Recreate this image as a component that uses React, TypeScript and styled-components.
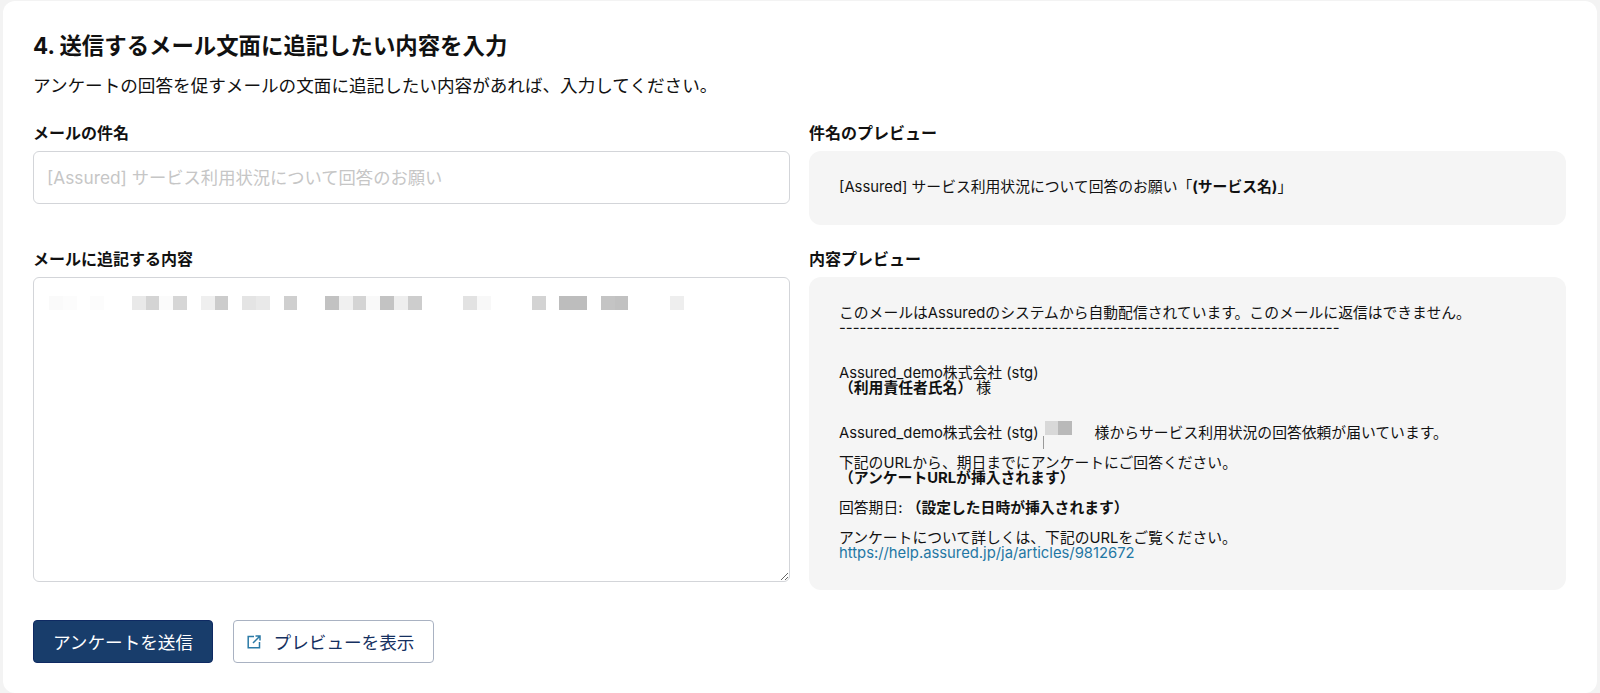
import React from "react";
import styled, { createGlobalStyle } from "styled-components";

const Global = createGlobalStyle`
    html, body {
        margin: 0;
        padding: 0;
        background: #f3f3f3;
    }
    body {
        font-family: "Inter", "Noto Sans CJK JP", sans-serif;
        color: #111;
    }
`;

const noteCells = [
    "#fafafa", "#fcfcfc", "", "#fcfcfc", "", "", "#e9e9e9", "#d4d4d4", "#fbfbfb", "#d6d6d6", "", "#efefef", "#cccccc", "",
    "#e4e4e4", "#e9e9e9", "", "#cfcfcf", "", "", "#c2c2c2", "#f0f0f0", "#d4d4d4", "#f9f9f9", "#c3c3c3", "#eeeeee", "#cdcdcd",
    "", "", "", "#e2e2e2", "#f8f8f8", "", "", "", "#d3d3d3", "", "#bdbdbd", "#bdbdbd", "", "#c4c4c4", "#c1c1c1", "", "", "", "#eeeeee",
];

const App = () => {
    return (
        <>
            <Global />
            <Card>
                <Title>4. 送信するメール文面に追記したい内容を入力</Title>
                <Lead>アンケートの回答を促すメールの文面に追記したい内容があれば、入力してください。</Lead>
                <FormGrid>
                    <Field>
                        <Label>メールの件名</Label>
                        <SubjectInput placeholder="[Assured] サービス利用状況について回答のお願い" />
                    </Field>
                    <Field>
                        <Label>件名のプレビュー</Label>
                        <SubjectPreview>
                            [Assured] サービス利用状況について回答のお願い「<b>(サービス名)</b>」
                        </SubjectPreview>
                    </Field>
                    <Field>
                        <Label>メールに追記する内容</Label>
                        <NoteWrap>
                            <NoteArea />
                            <NoteMosaic>
                                {noteCells.map((shade, key) => (
                                    <Cell key={key} $shade={shade} />
                                ))}
                            </NoteMosaic>
                        </NoteWrap>
                    </Field>
                    <Field>
                        <Label>内容プレビュー</Label>
                        <PreviewPanel>
                            このメールはAssuredのシステムから自動配信されています。このメールに返信はできません。<br />
                            <Dashes>-------------------------------------------------------------------------</Dashes><br />
                            <br />
                            <br />
                            Assured_demo株式会社 (stg)<br />
                            <b>（利用責任者氏名）</b> 様<br />
                            <br />
                            <br />
                            Assured_demo株式会社 (stg)
                            <InlineRedact>
                                <RedactCells>
                                    <Cell $shade="#d8d8d8" />
                                    <Cell $shade="#b9b9b9" />
                                </RedactCells>
                                <Caret />
                            </InlineRedact>
                            様からサービス利用状況の回答依頼が届いています。<br />
                            <br />
                            下記のURLから、期日までにアンケートにご回答ください。<br />
                            <b>（アンケートURLが挿入されます）</b><br />
                            <br />
                            回答期日: <b>（設定した日時が挿入されます）</b><br />
                            <br />
                            アンケートについて詳しくは、下記のURLをご覧ください。<br />
                            <HelpLink href="#">https://help.assured.jp/ja/articles/9812672</HelpLink>
                        </PreviewPanel>
                    </Field>
                </FormGrid>
                <Actions>
                    <PrimaryButton>アンケートを送信</PrimaryButton>
                    <SecondaryButton>
                        <svg width="14" height="14" viewBox="0 0 14 14" fill="none" stroke="#2b7aa6" strokeWidth="1.5">
                            <path d="M7 1.5H1.2v11.3h11.3V7" />
                            <path d="M8.5 1H13v4.5M13 1L6 8" />
                        </svg>
                        プレビューを表示
                    </SecondaryButton>
                </Actions>
            </Card>
        </>
    );
};

const Card = styled.div`
    box-sizing: border-box;
    width: 1594px;
    height: 692px;
    margin: 1px 0 0 3px;
    padding: 32px 30px 0;
    background: #fff;
    border-radius: 12px;
`;

const Title = styled.h2`
    margin: 0;
    font-size: 22.4px;
    line-height: 26px;
    font-weight: 700;
`;

const Lead = styled.p`
    margin: 14px 0 0;
    font-size: 17.6px;
    line-height: 26px;
`;

const FormGrid = styled.div`
    display: grid;
    grid-template-columns: 757px 757px;
    column-gap: 19px;
    row-gap: 24px;
    margin-top: 24px;
`;

const Field = styled.div`
    display: flex;
    flex-direction: column;
`;

const Label = styled.label`
    font-size: 16px;
    line-height: 20px;
    font-weight: 700;
    margin-bottom: 8px;
`;

const SubjectInput = styled.input`
    box-sizing: border-box;
    width: 100%;
    height: 53px;
    padding: 0 13px;
    border: 1px solid #d3d5d9;
    border-radius: 6px;
    background: #fff;
    font-family: inherit;
    font-size: 17.3px;
    outline: none;

    &::placeholder {
        color: #c6c6c6;
    }
`;

const NoteWrap = styled.div`
    position: relative;
    height: 305px;
`;

const NoteArea = styled.textarea`
    display: block;
    box-sizing: border-box;
    width: 100%;
    height: 100%;
    border: 1px solid #d3d5d9;
    border-radius: 6px;
    background: #fff;
    resize: vertical;
    outline: none;
`;

const NoteMosaic = styled.div`
    position: absolute;
    top: 19px;
    left: 16px;
    display: flex;
`;

const Cell = styled.span<{ $shade: string }>`
    display: block;
    flex: none;
    width: 13.8px;
    height: 14px;
    background: ${({ $shade }) => $shade || "transparent"};
`;

const PreviewPanel = styled.div`
    flex: 1;
    padding: 29px 30px;
    background: #f5f5f5;
    border-radius: 12px;
    font-size: 14.8px;
    line-height: 15px;
`;

const SubjectPreview = styled(PreviewPanel)`
    box-sizing: border-box;
    flex: none;
    height: 74px;
    white-space: nowrap;
`;

const Dashes = styled.span`
    letter-spacing: 0.05px;
`;

const InlineRedact = styled.span`
    position: relative;
    display: inline-block;
    width: 50px;
    height: 0;
    margin-left: 6px;
`;

const RedactCells = styled.span`
    position: absolute;
    top: -17px;
    left: 0;
    display: flex;
`;

const Caret = styled.i`
    position: absolute;
    left: -2px;
    top: -2px;
    width: 1px;
    height: 13px;
    background: #999;
`;

const HelpLink = styled.a`
    color: #1f77a4;
    text-decoration: none;
`;

const Actions = styled.div`
    display: flex;
    gap: 20px;
    margin-top: 30px;
`;

const PrimaryButton = styled.button`
    box-sizing: border-box;
    width: 180px;
    height: 43px;
    border: 1px solid #0f2a63;
    border-radius: 4px;
    background: #183d6b;
    color: #fff;
    font-family: inherit;
    font-size: 17.6px;
`;

const SecondaryButton = styled.button`
    box-sizing: border-box;
    display: flex;
    align-items: center;
    justify-content: center;
    gap: 13px;
    width: 201px;
    height: 43px;
    padding: 0 6px 0 0;
    border: 1px solid #a9b2c2;
    border-radius: 4px;
    background: #fff;
    color: #15305f;
    font-family: inherit;
    font-size: 17.6px;
`;

export default App;
